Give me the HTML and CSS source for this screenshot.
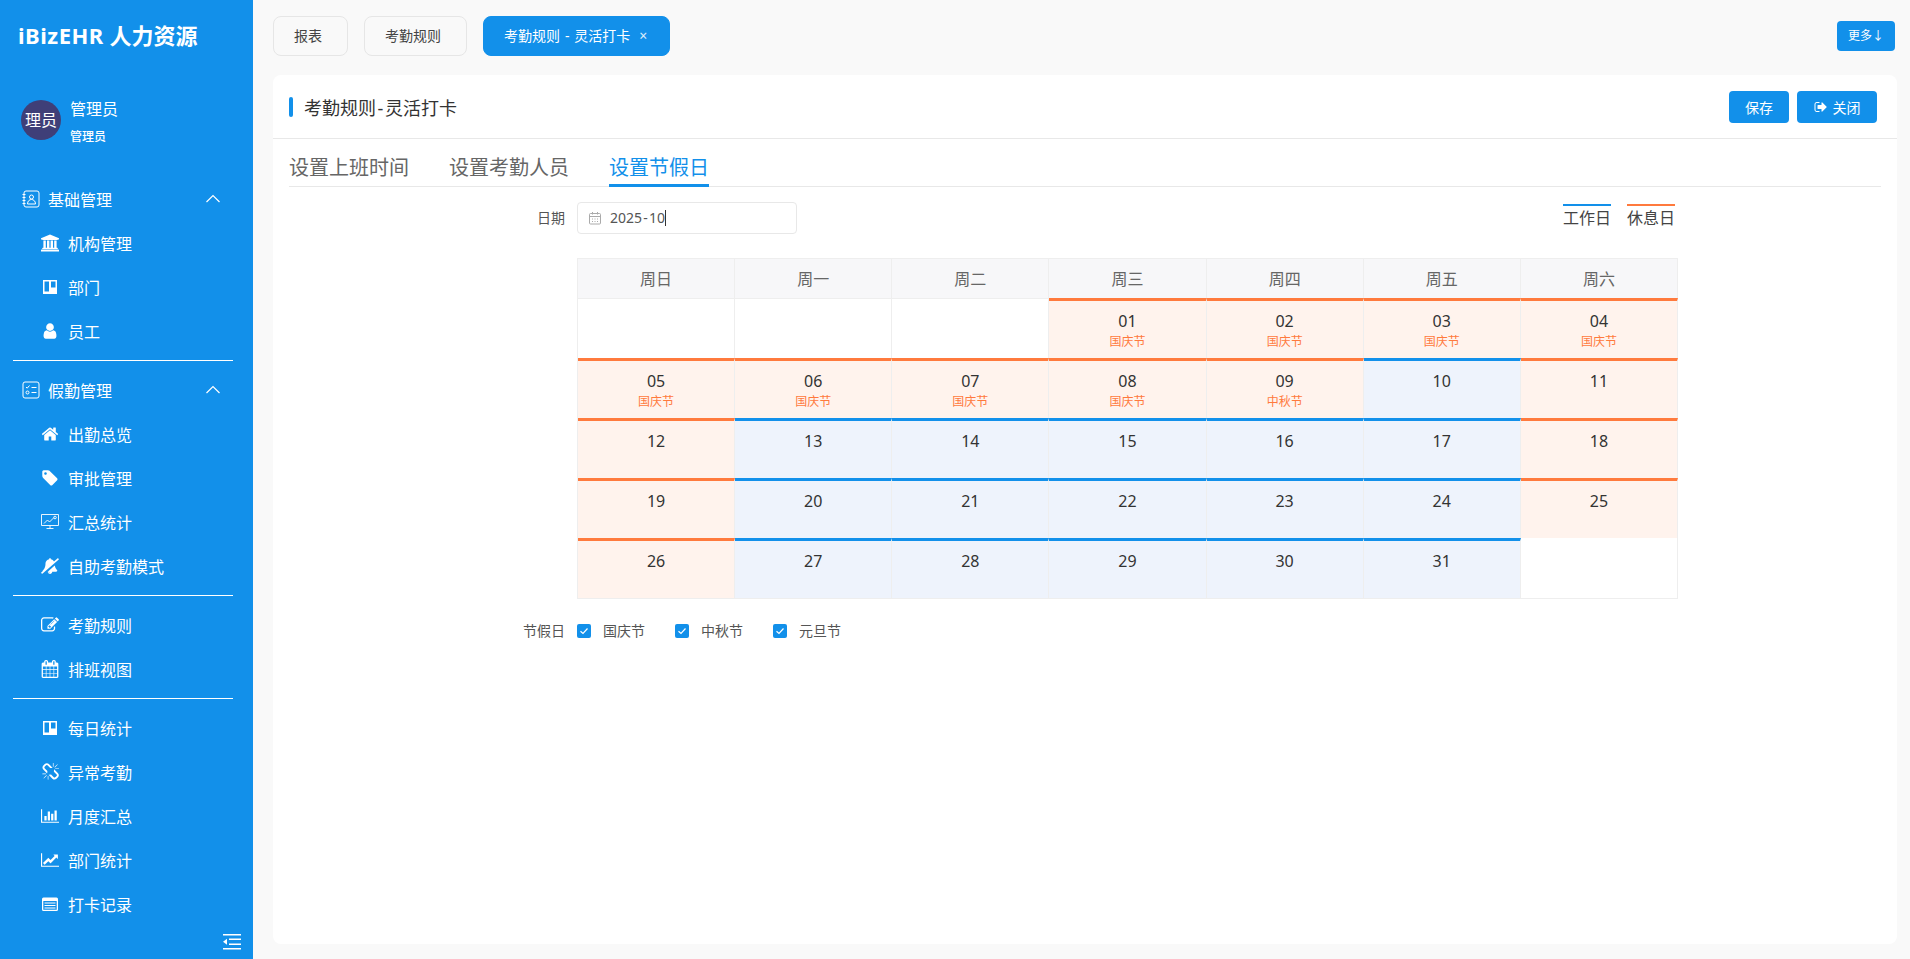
FILE: index.html
```html
<!DOCTYPE html>
<html lang="zh-CN">
<head>
<meta charset="utf-8">
<title>iBizEHR 人力资源</title>
<link rel="stylesheet" href="styles.css">
</head>
<body>
<div class="app">
  <aside class="sidebar">
    <div class="logo"><span class="logo-latin">iBizEHR</span> 人力资源</div>
    <div class="user">
      <div class="avatar">理员</div>
      <div class="user-text">
        <div class="user-name">管理员</div>
        <div class="user-role">管理员</div>
      </div>
    </div>
    <nav class="menu">
      <div class="group-head">
        <svg class="group-icon" viewBox="0 0 18 18" fill="none" stroke="#fff" stroke-width="1"><rect x="2" y="1" width="15" height="16" rx="2"/><circle cx="9.500" cy="7" r="2"/><path d="M5.500 14c0-6 8-6 8 0zM.5 4.500h3M.5 7.500h3M.5 10.500h3M.5 13.500h3"/></svg>
        <span class="group-title">基础管理</span>
        <svg class="chev" viewBox="0 0 14 9" fill="none" stroke="#fff" stroke-width="1.200"><path d="M0.500 8L7 1.500 13.500 8"/></svg>
      </div>
      <a class="item"><svg class="icon" viewBox="0 0 1920 1792" fill="#fff"><path d="M960 0l960 384v128h-128q0 26-20.500 45t-48.500 19h-1526q-28 0-48.500-19t-20.500-45h-128v-128zm-704 640h256v768h128v-768h256v768h128v-768h256v768h128v-768h256v768h59q28 0 48.500 19t20.500 45v64h-1664v-64q0-26 20.500-45t48.500-19h59v-768zm1595 960q28 0 48.500 19t20.500 45v128h-1920v-128q0-26 20.500-45t48.500-19h1782z"/></svg><span>机构管理</span></a>
      <a class="item"><svg class="icon" viewBox="0 0 18 18"><path fill="#fff" fill-rule="evenodd" d="M2 2H16V16H2zM3.500 3.500V13.500H8V3.500zM10 3.500V9.500H14.500V3.500z"/></svg><span>部门</span></a>
      <a class="item"><svg class="icon" viewBox="0 0 1792 1792" fill="#fff"><path d="M1536 1399q0 109-62.500 187t-150.500 78h-854q-88 0-150.500-78t-62.500-187q0-85 8.500-160.500t31.500-152 58.500-131 94-89 134.500-34.500q131 128 313 128t313-128q76 0 134.500 34.500t94 89 58.500 131 31.500 152 8.500 160.500zm-256-887q0 159-112.500 271.500t-271.500 112.500-271.500-112.500-112.500-271.500 112.500-271.500 271.500-112.500 271.500 112.500 112.500 271.500z"/></svg><span>员工</span></a>
      <div class="divider"></div>
      <div class="group-head">
        <svg class="group-icon" viewBox="0 0 18 18" fill="none" stroke="#fff" stroke-width="1"><rect x="1" y="1" width="16" height="16" rx="2"/><path d="M4 6l1.200 1.200L7.500 4.500M9.500 6.500h5M9.500 11.500h5"/><circle cx="5.500" cy="11.500" r="1.500"/></svg>
        <span class="group-title">假勤管理</span>
        <svg class="chev" viewBox="0 0 14 9" fill="none" stroke="#fff" stroke-width="1.200"><path d="M0.500 8L7 1.500 13.500 8"/></svg>
      </div>
      <a class="item"><svg class="icon" viewBox="0 0 1792 1792" fill="#fff"><path d="M1472 992v480q0 26-19 45t-45 19h-384v-384h-256v384h-384q-26 0-45-19t-19-45v-480q0-1 .5-3t.5-3l575-474 575 474q1 2 1 6zm223-69l-62 74q-8 9-21 11h-3q-13 0-21-7l-692-577-692 577q-12 8-24 7-13-2-21-11l-62-74q-8-10-7-23.500t11-21.500l719-599q32-26 76-26t76 26l244 204v-195q0-14 9-23t23-9h192q14 0 23 9t9 23v408l219 182q10 8 11 21.500t-7 23.500z"/></svg><span>出勤总览</span></a>
      <a class="item"><svg class="icon" viewBox="0 0 1792 1792" fill="#fff"><path d="M576 448q0-53-37.500-90.500t-90.500-37.500-90.500 37.500-37.500 90.500 37.500 90.500 90.500 37.500 90.500-37.500 37.500-90.500zm1067 576q0 53-37 90l-491 492q-39 37-91 37-53 0-90-37l-715-716q-38-37-64.500-101t-26.500-117v-416q0-52 38-90t90-38h416q53 0 117 26.500t102 64.500l715 714q37 39 37 91z"/></svg><span>审批管理</span></a>
      <a class="item"><svg class="icon" viewBox="0 0 18 18" fill="none" stroke="#fff" stroke-width="0.900"><path d="M.5 1.500H17.500V12.500H.5zM9 12.500V15.500M5.500 15.500H12.500"/><path d="M3 10.500L6.500 7 8.500 9 13 4.500"/><circle cx="14" cy="4.500" r="1.300"/></svg><span>汇总统计</span></a>
      <a class="item"><svg class="icon" viewBox="0 0 2048 1792" fill="#fff"><path d="M1558 852q61 356 298 556 0 52-38 90t-90 38h-448q0 106-75 181t-181 75-180.500-74.500-75.500-180.500zm-534 860q16 0 16-16t-16-16q-59 0-101.500-42.500t-42.500-101.500q0-16-16-16t-16 16q0 73 51.500 124.500t124.500 51.500zm1002-1600q8 10 7 23.500t-10 22.500l-1872 1622q-10 8-23.500 7t-21.500-11l-84-96q-8-10-7-23.500t10-21.500l186-161q-19-32-19-66 50-42 91-88t85-119.500 74.500-158.500 50-206 19.500-260q0-152 117-282.500t307-158.500q-8-19-8-39 0-40 28-68t68-28 68 28 28 68q0 20-8 39 124 18 219 82.500t148 157.500l418-363q10-8 23.500-7t21.500 11z"/></svg><span>自助考勤模式</span></a>
      <div class="divider"></div>
      <a class="item"><svg class="icon" viewBox="0 0 1792 1792" fill="#fff"><path d="M888 1184l116-116-152-152-116 116v56h96v96h56zm440-720q-16-16-33 1l-350 350q-17 17-1 33t33-1l350-350q17-17 1-33zm80 594v190q0 119-84.500 203.500t-203.500 84.500h-832q-119 0-203.500-84.500t-84.500-203.500v-832q0-119 84.500-203.500t203.500-84.500h832q63 0 117 25 15 7 18 23 3 17-9 29l-49 49q-14 14-32 8-23-6-45-6h-832q-66 0-113 47t-47 113v832q0 66 47 113t113 47h832q66 0 113-47t47-113v-126q0-13 9-22l64-64q15-15 35-7t20 29zm-96-738l288 288-672 672h-288v-288zm444 132l-92 92-288-288 92-92q28-28 68-28t68 28l152 152q28 28 28 68t-28 68z"/></svg><span>考勤规则</span></a>
      <a class="item"><svg class="icon" viewBox="0 0 1664 1792" fill="#fff"><path d="M128 1664h288v-288h-288v288zm352 0h320v-288h-320v288zm-352-352h288v-320h-288v320zm352 0h320v-320h-320v320zm-352-384h288v-288h-288v288zm736 736h320v-288h-320v288zm-384-736h320v-288h-320v288zm768 736h288v-288h-288v288zm-384-352h320v-320h-320v320zm-352-864v-288q0-13-9.500-22.500t-22.500-9.500h-64q-13 0-22.500 9.500t-9.500 22.500v288q0 13 9.500 22.500t22.500 9.500h64q13 0 22.500-9.500t9.500-22.500zm736 864h288v-320h-288v320zm-384-384h320v-288h-320v288zm384 0h288v-288h-288v288zm32-480v-288q0-13-9.500-22.500t-22.500-9.500h-64q-13 0-22.500 9.500t-9.500 22.500v288q0 13 9.500 22.500t22.500 9.500h64q13 0 22.500-9.500t9.500-22.500zm384-64v1280q0 52-38 90t-90 38h-1408q-52 0-90-38t-38-90v-1280q0-52 38-90t90-38h128v-96q0-66 47-113t113-47h64q66 0 113 47t47 113v96h384v-96q0-66 47-113t113-47h64q66 0 113 47t47 113v96h128q52 0 90 38t38 90z"/></svg><span>排班视图</span></a>
      <div class="divider"></div>
      <a class="item"><svg class="icon" viewBox="0 0 18 18"><path fill="#fff" fill-rule="evenodd" d="M2 2H16V16H2zM3.500 3.500V13.500H8V3.500zM10 3.500V9.500H14.500V3.500z"/></svg><span>每日统计</span></a>
      <a class="item"><svg class="icon" viewBox="0 0 1664 1792" fill="#fff"><path d="M503 1271l-256 256q-10 9-23 9-12 0-23-9-9-10-9-23t9-23l256-256q10-9 23-9t23 9q9 10 9 23t-9 23zm169 41v320q0 14-9 23t-23 9-23-9-9-23v-320q0-14 9-23t23-9 23 9 9 23zm-224-224q0 14-9 23t-23 9h-320q-14 0-23-9t-9-23 9-23 23-9h320q14 0 23 9t9 23zm1264 128q0 120-85 203l-147 146q-83 83-203 83-121 0-204-85l-334-335q-21-21-42-56l239-18 273 274q27 27 68 27.500t68-26.500l147-146q28-28 28-67 0-40-28-68l-274-275 18-239q35 21 56 42l336 336q84 86 84 204zm-617-724l-239 18-273-274q-28-28-68-28-39 0-68 27l-147 146q-28 28-28 67 0 40 28 68l274 274-18 240q-35-21-56-42l-336-336q-84-86-84-204 0-120 85-203l147-146q83-83 203-83 121 0 204 85l334 335q21 21 42 56zm633 84q0 14-9 23t-23 9h-320q-14 0-23-9t-9-23 9-23 23-9h320q14 0 23 9t9 23zm-544-544v320q0 14-9 23t-23 9-23-9-9-23v-320q0-14 9-23t23-9 23 9 9 23zm407 151l-256 256q-11 9-23 9t-23-9q-9-10-9-23t9-23l256-256q10-9 23-9t23 9q9 10 9 23t-9 23z"/></svg><span>异常考勤</span></a>
      <a class="item"><svg class="icon" viewBox="0 0 2048 1792" fill="#fff"><path d="M640 896v512h-256v-512h256zm384-512v1024h-256v-1024h256zm1024 1152v128h-2048v-1536h128v1408h1920zm-640-896v768h-256v-768h256zm384-384v1152h-256v-1152h256z"/></svg><span>月度汇总</span></a>
      <a class="item"><svg class="icon" viewBox="0 0 2048 1792" fill="#fff"><path d="M2048 1536v128h-2048v-1536h128v1408h1920zm-128-1248v435q0 21-19.500 29.500t-35.500-7.500l-121-121-633 633q-10 10-23 10t-23-10l-233-233-416 416-192-192 585-585q10-10 23-10t23 10l233 233 464-464-121-121q-16-16-7.500-35.500t29.500-19.500h435q14 0 23 9t9 23z"/></svg><span>部门统计</span></a>
      <a class="item"><svg class="icon" viewBox="0 0 18 18"><path fill="#fff" fill-rule="evenodd" d="M2.500 2.500H15.500a1.500 1.500 0 0 1 1.500 1.500V14.500a1.500 1.500 0 0 1-1.500 1.500H2.500A1.500 1.500 0 0 1 1 14.500V4a1.500 1.500 0 0 1 1.500-1.500zM2.300 6V14.700H15.700V6z"/><path stroke="#fff" stroke-width="1" d="M3.500 8H14.500M3.500 10.500H14.500M3.500 13H14.500"/></svg><span>打卡记录</span></a>
    </nav>
    <div class="collapse">
      <svg class="collapse-icon" viewBox="0 0 18 16" fill="#fff"><path d="M0 0H18V1.600H0zM6 4.500H18V6H6zM6 9.500H18V11H6zM0 14H18V15.600H0zM4 4.700V10.800L0 7.800z"/></svg>
    </div>
  </aside>

  <main class="main">
    <div class="tabbar">
      <div class="tab">报表</div>
      <div class="tab">考勤规则</div>
      <div class="tab tab-active">考勤规则 <span class="dash">-</span> 灵活打卡<span class="tab-close">×</span></div>
      <div class="more">更多↓</div>
    </div>
    <section class="card">
      <header class="card-head">
        <span class="title-mark"></span>
        <h1 class="title">考勤规则<span class="dash">-</span>灵活打卡</h1>
        <div class="actions">
          <button class="btn btn-save">保存</button>
          <button class="btn btn-close"><svg class="btn-icon" viewBox="0 0 1664 1792" fill="#fff"><path d="M704 1440q0 4 1 20t.5 26.500-3 23.500-10 19.500-20.500 6.500h-320q-119 0-203.500-84.500t-84.500-203.500v-704q0-119 84.500-203.500t203.500-84.500h320q13 0 22.500 9.500t9.500 22.500q0 4 1 20t.5 26.500-3 23.500-10 19.500-20.500 6.500h-320q-66 0-113 47t-47 113v704q0 66 47 113t113 47h312l11.500 1 11.500 3 8 5.500 7 9 2 13.500zm928-544q0 26-19 45l-544 544q-19 19-45 19t-45-19-19-45v-288h-448q-26 0-45-19t-19-45v-384q0-26 19-45t45-19h448v-288q0-26 19-45t45-19 45 19l544 544q19 19 19 45z"/></svg>关闭</button>
        </div>
      </header>
      <div class="card-body">
        <div class="subtabs">
          <div class="subtab">设置上班时间</div>
          <div class="subtab">设置考勤人员</div>
          <div class="subtab subtab-active">设置节假日</div>
        </div>
        <div class="date-row">
          <label class="form-label">日期</label>
          <div class="date-input">
            <svg class="cal-icon" viewBox="0 0 14 14" fill="none" stroke="#aaa" stroke-width="1"><rect x="1.500" y="2.500" width="11" height="10.500" rx="1"/><path d="M1.500 5.500H12.500M4.500 1V3.500M9.500 1V3.500M4 8H5M6.500 8H7.500M9 8H10M4 10.500H5M6.500 10.500H7.500M9 10.500H10"/></svg>
            <span class="date-value">2025<span class="dash">-</span>10</span><span class="caret"></span>
          </div>
          <div class="legend">
            <span class="legend-item legend-work">工作日</span>
            <span class="legend-item legend-rest">休息日</span>
          </div>
        </div>
        <div class="calendar">
          <div class="cal-head">周日</div><div class="cal-head">周一</div><div class="cal-head">周二</div><div class="cal-head">周三</div><div class="cal-head">周四</div><div class="cal-head">周五</div><div class="cal-head">周六</div>

          <div class="day day-empty"></div><div class="day day-empty"></div><div class="day day-empty"></div>
          <div class="day rest"><div class="num">01</div><div class="hol">国庆节</div></div>
          <div class="day rest"><div class="num">02</div><div class="hol">国庆节</div></div>
          <div class="day rest"><div class="num">03</div><div class="hol">国庆节</div></div>
          <div class="day rest"><div class="num">04</div><div class="hol">国庆节</div></div>

          <div class="day rest"><div class="num">05</div><div class="hol">国庆节</div></div>
          <div class="day rest"><div class="num">06</div><div class="hol">国庆节</div></div>
          <div class="day rest"><div class="num">07</div><div class="hol">国庆节</div></div>
          <div class="day rest"><div class="num">08</div><div class="hol">国庆节</div></div>
          <div class="day rest"><div class="num">09</div><div class="hol">中秋节</div></div>
          <div class="day work"><div class="num">10</div></div>
          <div class="day rest"><div class="num">11</div></div>

          <div class="day rest"><div class="num">12</div></div>
          <div class="day work"><div class="num">13</div></div>
          <div class="day work"><div class="num">14</div></div>
          <div class="day work"><div class="num">15</div></div>
          <div class="day work"><div class="num">16</div></div>
          <div class="day work"><div class="num">17</div></div>
          <div class="day rest"><div class="num">18</div></div>

          <div class="day rest"><div class="num">19</div></div>
          <div class="day work"><div class="num">20</div></div>
          <div class="day work"><div class="num">21</div></div>
          <div class="day work"><div class="num">22</div></div>
          <div class="day work"><div class="num">23</div></div>
          <div class="day work"><div class="num">24</div></div>
          <div class="day rest"><div class="num">25</div></div>

          <div class="day rest"><div class="num">26</div></div>
          <div class="day work"><div class="num">27</div></div>
          <div class="day work"><div class="num">28</div></div>
          <div class="day work"><div class="num">29</div></div>
          <div class="day work"><div class="num">30</div></div>
          <div class="day work"><div class="num">31</div></div>
          <div class="day day-empty day-last"></div>
        </div>
        <div class="holiday-row">
          <label class="form-label">节假日</label>
          <div class="checks">
            <span class="check"><svg class="box" viewBox="0 0 14 14"><rect width="14" height="14" rx="2" fill="#1290ea"/><path d="M3.500 7.200L6 9.500 10.500 4.500" fill="none" stroke="#fff" stroke-width="1.200"/></svg>国庆节</span>
            <span class="check"><svg class="box" viewBox="0 0 14 14"><rect width="14" height="14" rx="2" fill="#1290ea"/><path d="M3.500 7.200L6 9.500 10.500 4.500" fill="none" stroke="#fff" stroke-width="1.200"/></svg>中秋节</span>
            <span class="check"><svg class="box" viewBox="0 0 14 14"><rect width="14" height="14" rx="2" fill="#1290ea"/><path d="M3.500 7.200L6 9.500 10.500 4.500" fill="none" stroke="#fff" stroke-width="1.200"/></svg>元旦节</span>
          </div>
        </div>
      </div>
    </section>
  </main>
</div>
</body>
</html>
```

FILE: styles.css
```css
* { box-sizing: border-box; }
html, body { margin: 0; height: 100%; overflow: hidden; }
body {
  font-family: "Noto Sans", "Noto Sans CJK SC", sans-serif;
  font-size: 14px;
  color: #333;
  background: #f9f9f9;
}
.app { display: flex; height: 959px; }
.dash { margin: 0 .09em; }

/* sidebar */
.sidebar {
  width: 253px;
  flex: none;
  background: #1290ea;
  color: #fff;
  display: flex;
  flex-direction: column;
}
.logo {
  height: 70px;
  padding-left: 18px;
  line-height: 70px;
  font-size: 22px;
  font-weight: 700;
}
.logo-latin { letter-spacing: .5px; }
.user {
  display: flex;
  align-items: center;
  height: 74px;
  margin-top: 13px;
  padding-left: 21px;
  gap: 9px;
}
.avatar {
  width: 40px;
  height: 40px;
  border-radius: 50%;
  background: #3f3f78;
  text-align: center;
  line-height: 40px;
  font-size: 16px;
  white-space: nowrap;
}
.user-text { padding-top: 2px; }
.user-name { font-size: 16px; line-height: 24px; }
.user-role { font-size: 12px; line-height: 18px; margin-top: 7px; font-weight: 500; }
.menu { margin-top: 20px; }
.group-head, .item {
  display: flex;
  align-items: center;
  height: 44px;
  padding-bottom: 1px;
  font-size: 16px;
}
.group-head { padding-left: 22px; }
.group-icon { width: 18px; height: 18px; flex: none; }
.group-title { margin-left: 8px; }
.chev { width: 14px; height: 9px; margin-left: 94px; }
.item { padding-left: 41px; }
.icon { width: 18px; height: 18px; flex: none; margin-right: 9px; }
.divider { height: 1px; margin: 7px 20px 7px 13px; background: #fff; }
.collapse { display: flex; justify-content: flex-end; padding: 8px 12px 0 0; }
.collapse-icon { width: 18px; height: 16px; }

/* main */
.main {
  flex: 1;
  min-width: 0;
  padding: 16px 13px 15px 20px;
  display: flex;
  flex-direction: column;
}
.tabbar {
  display: flex;
  align-items: flex-start;
  gap: 16px;
  height: 59px;
  flex: none;
}
.tab {
  height: 40px;
  padding: 0 25px 0 20px;
  border: 1px solid #e6e6e6;
  border-radius: 8px;
  line-height: 38px;
  background: #f9f9f9;
  color: #444;
  white-space: nowrap;
}
.tab-active {
  padding: 0 22px 0 20px;
  background: #1290ea;
  border-color: #1290ea;
  color: #fff;
}
.tab-close { margin-left: 9px; font-size: 14px; opacity: .85; }
.more {
  margin: 5px 2px 0 auto;
  width: 58px;
  height: 30px;
  border-radius: 4px;
  background: #1290ea;
  color: #fff;
  font-size: 12px;
  line-height: 30px;
  text-align: center;
}
.card {
  flex: 1;
  background: #fff;
  border-radius: 8px;
  display: flex;
  flex-direction: column;
}
.card-head {
  display: flex;
  align-items: center;
  height: 64px;
  flex: none;
  padding: 0 20px 0 16px;
  border-bottom: 1px solid #e8e8e8;
}
.title-mark { width: 4px; height: 20px; border-radius: 2px; background: #1290ea; }
.title { margin: 0 0 0 11px; font-size: 18px; font-weight: 400; color: #333; }
.actions { margin-left: auto; display: flex; gap: 8px; }
.btn {
  height: 32px;
  padding: 0;
  border: 0;
  border-radius: 4px;
  background: #1290ea;
  color: #fff;
  font: inherit;
  display: flex;
  align-items: center;
  justify-content: center;
}
.btn-save { width: 60px; }
.btn-close { width: 80px; }
.btn-icon { width: 13px; height: 14px; margin-right: 6px; }
.card-body { padding: 0 16px; }
.subtabs {
  display: flex;
  gap: 40px;
  height: 48px;
  border-bottom: 1px solid #e8e8e8;
}
.subtab {
  height: 48px;
  line-height: 58px;
  font-size: 20px;
  color: #666;
}
.subtab-active { color: #1290ea; border-bottom: 3px solid #1290ea; }
.date-row { display: flex; align-items: flex-start; margin-top: 15px; height: 32px; }
.form-label {
  width: 276px;
  margin-right: 12px;
  flex: none;
  text-align: right;
  line-height: 32px;
  color: #555;
}
.date-input {
  width: 220px;
  height: 32px;
  padding-left: 10px;
  border: 1px solid #e8e8e8;
  border-radius: 4px;
  display: flex;
  align-items: center;
  color: #555;
}
.cal-icon { width: 14px; height: 14px; margin-right: 8px; }
.date-value { line-height: 20px; }
.caret { width: 1px; height: 16px; background: #333; }
.legend { margin: 2px 206px 0 auto; display: flex; gap: 16px; }
.legend-item { border-top: 2px solid; font-size: 16px; line-height: 24px; color: #444; }
.legend-work { border-color: #1290ea; }
.legend-rest { border-color: #ff7a3d; }

/* calendar */
.calendar {
  display: grid;
  grid-template-columns: repeat(7, 1fr);
  width: 1101px;
  margin: 24px 0 0 288px;
  border-left: 1px solid #eee;
  border-top: 1px solid #eee;
}
.cal-head {
  height: 39px;
  border-right: 1px solid #eee;
  background: #f7f7f9;
  text-align: center;
  line-height: 41px;
  color: #666;
  font-size: 16px;
}
.day {
  height: 60px;
  padding-top: 8px;
  border-right: 1px solid #eee;
  border-top: 3px solid #eee;
  text-align: center;
}
.day-empty { border-top: 1px solid #eee; }
.day-last { border-top: 0; height: 60px; }
.calendar .day:nth-child(n+36) { border-bottom: 1px solid #eee; height: 61px; }
.num { font-size: 16px; line-height: 24px; color: #333; }
.hol { font-size: 12px; line-height: 18px; color: #ff7a3d; }
.rest { border-top-color: #ff7a3d; background: #fff3ed; }
.work { border-top-color: #1290ea; background: #eef3fc; }
.holiday-row { display: flex; align-items: center; margin-top: 20px; height: 24px; }
.holiday-row .form-label { line-height: 24px; }
.checks { display: flex; gap: 30px; color: #555; }
.check { display: flex; align-items: center; line-height: 24px; }
.box { width: 14px; height: 14px; margin-right: 12px; }
```
